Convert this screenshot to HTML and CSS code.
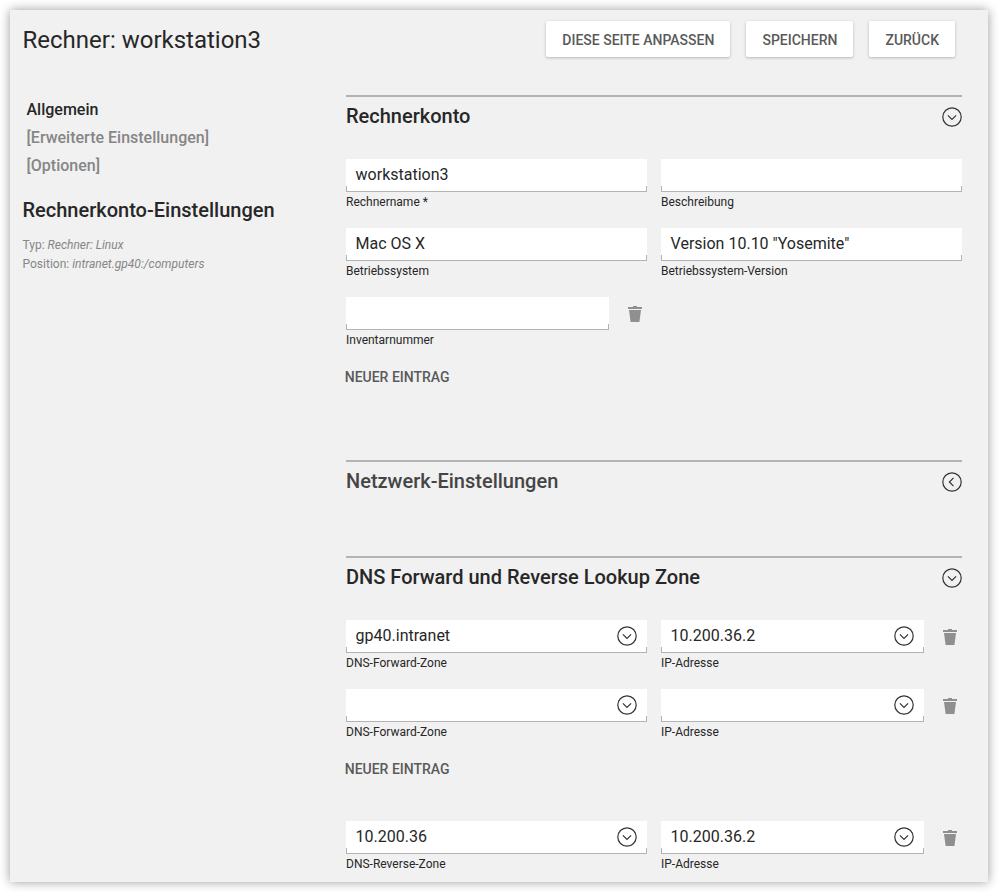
FILE: index.html
```html
<!DOCTYPE html>
<html lang="de">
<head>
<meta charset="utf-8">
<title>Rechner: workstation3</title>
<link rel="stylesheet" href="styles.css">
</head>
<body>
<svg class="sprite" aria-hidden="true">
  <symbol id="down" viewBox="0 0 20 20"><circle cx="10" cy="10" r="9.2"/><path d="M5.9 8.3 10 12.4 14.1 8.3"/></symbol>
  <symbol id="left" viewBox="0 0 20 20"><circle cx="10" cy="10" r="9.2"/><path d="M11.5 5.9 7.4 10 11.5 14.1"/></symbol>
  <symbol id="trash" viewBox="0 0 14 16"><path d="M5 0h4v1h5v2H0V1h5zM1 4h12l-1.6 12H2.6z"/></symbol>
</svg>
<main class="panel">
  <header class="header">
    <h1>Rechner: workstation3</h1>
    <div class="actions">
      <button class="btn">DIESE SEITE ANPASSEN</button>
      <button class="btn">SPEICHERN</button>
      <button class="btn">ZURÜCK</button>
    </div>
  </header>
  <div class="body">
    <aside class="side">
      <nav class="tabs">
        <a class="active">Allgemein</a>
        <a>[Erweiterte Einstellungen]</a>
        <a>[Optionen]</a>
      </nav>
      <h2>Rechnerkonto-Einstellungen</h2>
      <p>Typ: <em>Rechner: Linux</em></p>
      <p>Position: <em>intranet.gp40:/computers</em></p>
    </aside>
    <div class="content">
      <section class="section">
        <h2>Rechnerkonto<svg class="circle"><use href="#down"/></svg></h2>
        <div class="row">
          <div class="field"><div class="input">workstation3</div><label>Rechnername *</label></div>
          <div class="field"><div class="input"></div><label>Beschreibung</label></div>
        </div>
        <div class="row">
          <div class="field"><div class="input">Mac OS X</div><label>Betriebssystem</label></div>
          <div class="field"><div class="input">Version 10.10 "Yosemite"</div><label>Betriebssystem-Version</label></div>
        </div>
        <div class="row">
          <div class="removable"><div class="field"><div class="input"></div><label>Inventarnummer</label></div><svg class="trash"><use href="#trash"/></svg></div>
        </div>
        <button class="add">NEUER EINTRAG</button>
      </section>
      <section class="section closed">
        <h2>Netzwerk-Einstellungen<svg class="circle"><use href="#left"/></svg></h2>
      </section>
      <section class="section">
        <h2>DNS Forward und Reverse Lookup Zone<svg class="circle"><use href="#down"/></svg></h2>
        <div class="row">
          <div class="field"><div class="input">gp40.intranet<svg class="circle"><use href="#down"/></svg></div><label>DNS-Forward-Zone</label></div>
          <div class="removable"><div class="field"><div class="input">10.200.36.2<svg class="circle"><use href="#down"/></svg></div><label>IP-Adresse</label></div><svg class="trash"><use href="#trash"/></svg></div>
        </div>
        <div class="row">
          <div class="field"><div class="input"><svg class="circle"><use href="#down"/></svg></div><label>DNS-Forward-Zone</label></div>
          <div class="removable"><div class="field"><div class="input"><svg class="circle"><use href="#down"/></svg></div><label>IP-Adresse</label></div><svg class="trash"><use href="#trash"/></svg></div>
        </div>
        <button class="add">NEUER EINTRAG</button>
        <div class="row group">
          <div class="field"><div class="input">10.200.36<svg class="circle"><use href="#down"/></svg></div><label>DNS-Reverse-Zone</label></div>
          <div class="removable"><div class="field"><div class="input">10.200.36.2<svg class="circle"><use href="#down"/></svg></div><label>IP-Adresse</label></div><svg class="trash"><use href="#trash"/></svg></div>
        </div>
      </section>
    </div>
  </div>
</main>
</body>
</html>
```
FILE: styles.css
```css
* { box-sizing: border-box; }
body {
  margin: 0;
  padding: 10px;
  height: 892px;
  background: #fff;
  color: #272727;
  font-family: Roboto, "Liberation Sans", sans-serif;
}
h1, h2, p { margin: 0; }
button { font-family: inherit; border: 0; padding: 0; color: #5a5a5a; font-size: 14px; font-weight: 500; }
.sprite { position: absolute; width: 0; height: 0; }
.panel {
  width: 978px;
  height: 872px;
  padding: 0 26px 0 12.5px;
  background: #f1f1f1;
  box-shadow: 0 0 10px rgba(0, 0, 0, .4);
}
.header { display: flex; justify-content: space-between; height: 85px; padding: 11px 7px 0 0; }
h1 { font-size: 24px; font-weight: 400; line-height: 38px; }
.actions { display: flex; gap: 16px; }
.btn {
  height: 36px;
  padding: 1px 16px 0;
  background: #fff;
  border-radius: 2px;
  box-shadow: 0 1px 3px rgba(0, 0, 0, .25);
}
.body { display: flex; justify-content: space-between; }
.side { width: 300px; padding-top: 1px; }
.side h2 { margin: 17px 0 13px; font-size: 20px; font-weight: 500; line-height: 26px; }
.side p { font-size: 12px; line-height: 19px; color: #868686; }
.tabs { display: flex; flex-direction: column; padding-left: 4px; font-size: 16px; font-weight: 500; line-height: 28px; color: #868686; }
.active { color: #272727; }
.content { width: 616px; }
.section { border-top: 2px solid #b3b3b3; margin-bottom: 72px; }
.section:last-child { height: 324px; margin-bottom: 0; }
.section h2 {
  display: flex;
  justify-content: space-between;
  align-items: center;
  height: 38px;
  margin-bottom: 24px;
  font-size: 20px;
  font-weight: 500;
}
.section h2 .circle { margin-top: 2px; }
.closed { height: 64px; margin-bottom: 32px; }
.closed h2 { color: #454545; }
.row { display: grid; grid-template-columns: 301px 301px; gap: 14px; height: 69px; }
.row:last-child { height: 60px; }
.group { margin-top: 41px; }
.input {
  display: flex;
  align-items: center;
  height: 33px;
  padding: 0 10px 2px 9.6px;
  font-size: 16px;
  background:
    linear-gradient(#b3b3b3, #b3b3b3) left bottom / 1px 6px no-repeat,
    linear-gradient(#b3b3b3, #b3b3b3) right bottom / 1px 6px no-repeat,
    linear-gradient(#b3b3b3, #b3b3b3) left bottom / 100% 1px no-repeat,
    #fff;
}
.input .circle { margin-left: auto; }
.field label { display: block; font-size: 12px; line-height: 20px; }
.removable { display: flex; }
.removable .field { width: 263px; }
.circle { width: 20px; height: 20px; fill: none; stroke: #333; stroke-width: 1.2; }
.trash { width: 14px; height: 16px; margin: 9px 0 0 19px; fill: #8f8f8f; }
.add { display: block; height: 22px; margin-left: -1.3px; background: none; }
```
